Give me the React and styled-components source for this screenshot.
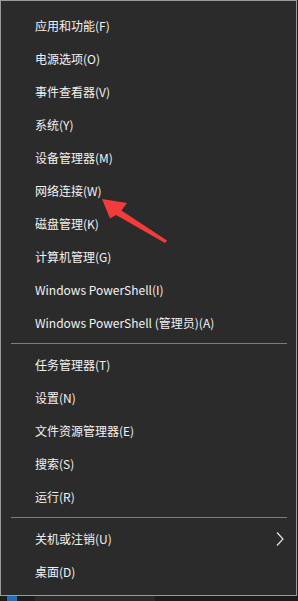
import React from 'react';
import styled, { createGlobalStyle } from 'styled-components';

const GlobalStyle = createGlobalStyle`
  html, body {
    margin: 0;
    padding: 0;
    background: #1d1d1d;
  }
`;

const Screen = styled.div`
  width: 298px;
  height: 601px;
  position: relative;
  overflow: hidden;
  background: #1d1d1d;
`;

const Menu = styled.div`
  width: 297px;
  box-sizing: border-box;
  background: #2b2b2b;
  border: 1px solid #9b9b9b;
  padding: 8px 0 7px;
  display: flex;
  flex-direction: column;
`;

const Item = styled.div`
  height: 33px;
  display: flex;
  align-items: center;
  justify-content: space-between;
  padding: 0 12px 0 34px;
  color: #f2f2f2;
  font-family: "Noto Sans CJK SC", "Noto Sans", sans-serif;
  font-size: 12px;
  white-space: nowrap;
`;

const Separator = styled.div`
  height: 1px;
  margin: 4px 9px 4px 10px;
  background: #7d7d7d;
`;

const Taskbar = styled.div`
  height: 5px;
  display: flex;
  align-items: stretch;
  gap: 18px;
  padding-left: 7px;
`;

const TaskIcon = styled.div`
  width: ${p => p.w}px;
  background: ${p => p.c};
`;

const Arrow = styled.svg`
  position: absolute;
  left: 0;
  top: 0;
  pointer-events: none;
`;

const groups = [
  ['应用和功能(F)', '电源选项(O)', '事件查看器(V)', '系统(Y)', '设备管理器(M)', '网络连接(W)', '磁盘管理(K)', '计算机管理(G)', 'Windows PowerShell(I)', 'Windows PowerShell (管理员)(A)'],
  ['任务管理器(T)', '设置(N)', '文件资源管理器(E)', '搜索(S)', '运行(R)'],
  ['关机或注销(U)', '桌面(D)'],
];

function Chevron() {
  return (
    <svg width="8" height="14" viewBox="0 0 8 14">
      <path d="M1 0.5 L7 7 L1 13.5" fill="none" stroke="#e6e6e6" strokeWidth="1.2" />
    </svg>
  );
}

export default function App() {
  return (
    <Screen>
      <GlobalStyle />
      <Menu>
        {groups.map((g, gi) => (
          <React.Fragment key={gi}>
            {gi > 0 && <Separator />}
            {g.map(label => (
              <Item key={label}>
                <span>{label}</span>
                {label.startsWith('关机') && <Chevron />}
              </Item>
            ))}
          </React.Fragment>
        ))}
      </Menu>
      <Taskbar>
        <TaskIcon w={10} c="#1f6fb5" />
        <TaskIcon w={120} c="#2a2a2a" />
      </Taskbar>
      <Arrow width="298" height="601" viewBox="0 0 298 601">
        <polygon
          points="102,199 127,203 121.5,210.5 167,240.5 165,243 116,215 110,218.5"
          fill="#f23b3b"
        />
      </Arrow>
    </Screen>
  );
}
